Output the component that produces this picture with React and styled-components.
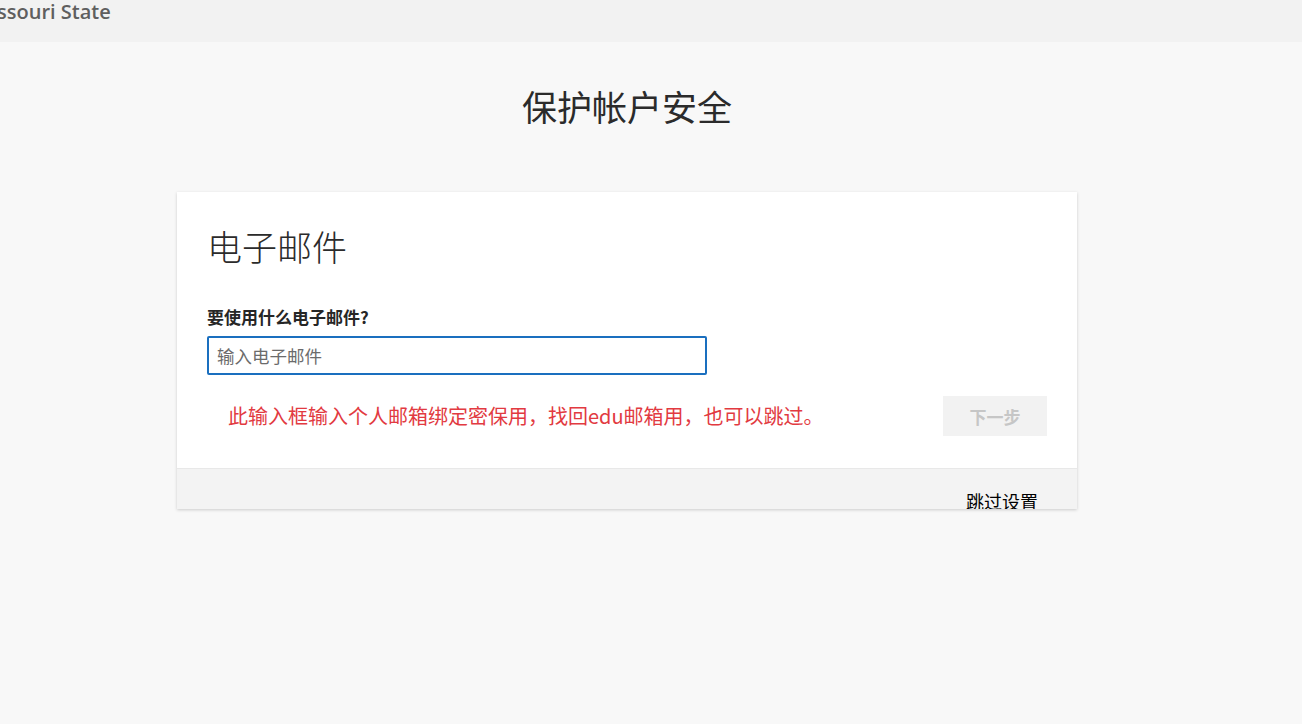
import React from "react";
import styled, { createGlobalStyle } from "styled-components";

const GlobalStyle = createGlobalStyle`
  html, body {
    margin: 0;
    padding: 0;
    background: #f8f8f8;
    font-family: "Noto Sans", "Noto Sans CJK SC", sans-serif;
  }
`;

const Page = styled.div`
  min-height: 724px;
  background: #f8f8f8;
  overflow: hidden;
`;

const Header = styled.div`
  height: 42px;
  background: #f2f2f2;
  overflow: hidden;
`;

const Brand = styled.div`
  margin-left: -27px;
  margin-top: -2px;
  font-size: 20px;
  font-weight: 600;
  color: #5f5f5f;
  font-family: "Open Sans", "Noto Sans", sans-serif;
  white-space: nowrap;
`;

const Main = styled.main`
  width: 1254px;
`;

const Title = styled.h1`
  margin: 40px 0 0;
  text-align: center;
  font-size: 35px;
  font-weight: 400;
  line-height: 48px;
  color: #2b2b2b;
  font-family: "Noto Sans CJK SC", sans-serif;
`;

const Card = styled.div`
  width: 900px;
  margin: 62px auto 0;
  background: #fff;
  box-shadow: 0 1px 3px rgba(0, 0, 0, 0.18);
`;

const Body = styled.div`
  padding: 27px 30px 32px;
`;

const Heading = styled.h2`
  margin: 0;
  font-size: 35px;
  font-weight: 300;
  line-height: 54px;
  color: #2b2b2b;
  font-family: "Noto Sans CJK SC", sans-serif;
`;

const Label = styled.label`
  display: block;
  margin-top: 33px;
  font-size: 17px;
  font-weight: 700;
  line-height: 22px;
  color: #262626;
  font-family: "Noto Sans CJK SC", sans-serif;
`;

const Input = styled.input`
  display: block;
  box-sizing: border-box;
  margin-top: 8px;
  width: 500px;
  height: 39px;
  padding: 0 8px;
  border: 2px solid #1a6fbf;
  border-radius: 2px;
  outline: none;
  font-size: 17.5px;
  font-family: "Noto Sans CJK SC", sans-serif;
  color: #333;
  &::placeholder {
    color: #6b6b6b;
  }
`;

const Row = styled.div`
  display: flex;
  align-items: center;
  justify-content: space-between;
  margin-top: 21px;
`;

const Note = styled.div`
  margin-left: 21px;
  font-size: 20px;
  line-height: 26px;
  color: #e23a41;
  font-family: "Noto Sans CJK SC", sans-serif;
`;

const NextButton = styled.button`
  width: 104px;
  height: 40px;
  border: none;
  background: #f2f2f2;
  color: #c6c6c6;
  font-size: 17px;
  font-weight: 700;
  font-family: "Noto Sans CJK SC", sans-serif;
`;

const Footer = styled.div`
  height: 40px;
  background: #f3f3f3;
  border-top: 1px solid #e8e8e8;
  display: flex;
  justify-content: flex-end;
  align-items: flex-end;
  padding-right: 39px;
  overflow: hidden;
`;

const SkipLink = styled.a`
  font-size: 18px;
  line-height: 24px;
  margin-bottom: -4px;
  color: #000;
  font-family: "Noto Sans CJK SC", sans-serif;
  text-decoration: none;
`;

export default function App() {
  return (
    <Page>
      <GlobalStyle />
      <Header>
        <Brand>Missouri State</Brand>
      </Header>
      <Main>
        <Title>保护帐户安全</Title>
        <Card>
          <Body>
            <Heading>电子邮件</Heading>
            <Label htmlFor="email">要使用什么电子邮件?</Label>
            <Input id="email" type="text" placeholder="输入电子邮件" autoFocus />
            <Row>
              <Note>此输入框输入个人邮箱绑定密保用，找回edu邮箱用，也可以跳过。</Note>
              <NextButton disabled>下一步</NextButton>
            </Row>
          </Body>
          <Footer>
            <SkipLink href="#">跳过设置</SkipLink>
          </Footer>
        </Card>
      </Main>
    </Page>
  );
}
